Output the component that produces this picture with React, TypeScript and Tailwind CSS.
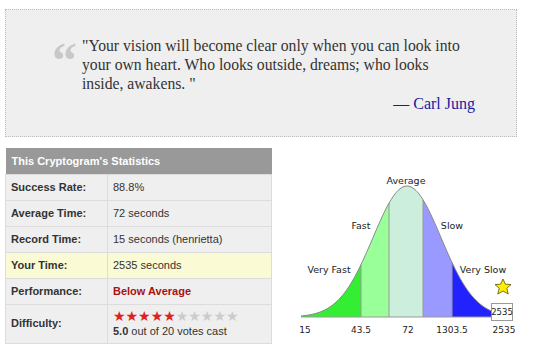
import React from "react";

const MU = 127;
const BASE = 157;
const PEAK = 131;
const SIGMA = 34;

const curveY = (x: number) => BASE - PEAK * Math.exp(-((x - MU) ** 2) / (2 * SIGMA * SIGMA));

// closed area under the curve between two x values
const areaPath = (x0: number, x1: number) => {
  let d = `M${x0},${BASE} `;
  for (let x = x0; x <= x1; x += 1) d += `L${x},${curveY(x).toFixed(2)} `;
  d += `L${x1},${curveY(x1).toFixed(2)} L${x1},${BASE} Z`;
  return d;
};

const linePath = (x0: number, x1: number) => {
  let d = `M${x0},${curveY(x0).toFixed(2)} `;
  for (let x = x0 + 1; x <= x1; x += 1) d += `L${x},${curveY(x).toFixed(2)} `;
  return d;
};

const zones = [
  { from: 21, to: 81, fill: "#33ee33" },
  { from: 81, to: 109, fill: "#99ff99" },
  { from: 109, to: 143, fill: "#cceedd" },
  { from: 143, to: 172, fill: "#9999ff" },
  { from: 172, to: 212, fill: "#2222ff" },
];

const BellChart = () => {
  const label = "fill-[#222] text-[9.5px] font-['DejaVu_Sans',sans-serif]";
  const axis = "fill-[#222] text-[9px] font-['DejaVu_Sans',sans-serif]";
  return (
    <svg width="260" height="188" viewBox="0 0 260 188">
      {zones.map((z) => (
        <path key={z.from} d={areaPath(z.from, z.to)} fill={z.fill} />
      ))}
      {[81, 109, 143, 172].map((x) => (
        <line key={x} x1={x} y1={BASE} x2={x} y2={curveY(x)} stroke="#999" strokeWidth="1" />
      ))}
      <path d={linePath(21, 212)} fill="none" stroke="#888" strokeWidth="1" />
      <line x1="21" y1={BASE} x2="212" y2={BASE} stroke="#999" strokeWidth="1" />

      <text x="126" y="24" textAnchor="middle" className={label}>Average</text>
      <text x="81" y="69" textAnchor="middle" className={label}>Fast</text>
      <text x="172" y="69" textAnchor="middle" className={label}>Slow</text>
      <text x="49" y="113" textAnchor="middle" className={label}>Very Fast</text>
      <text x="203" y="113" textAnchor="middle" className={label}>Very Slow</text>

      <polygon
        points="223,119 225.4,124.2 231,124.6 226.8,128.2 228.2,134 223,131 217.8,134 219.2,128.2 215,124.6 220.6,124.2"
        fill="#ffee00"
        stroke="#555500"
        strokeWidth="0.8"
      />
      <rect x="211.5" y="143.5" width="21" height="17" fill="#fff" stroke="#999" />
      <text x="222" y="155" textAnchor="middle" className="fill-[#222] text-[8.5px] font-['DejaVu_Sans',sans-serif]">
        2535
      </text>

      <text x="25" y="173" textAnchor="middle" className={axis}>15</text>
      <text x="81" y="173" textAnchor="middle" className={axis}>43.5</text>
      <text x="128" y="173" textAnchor="middle" className={axis}>72</text>
      <text x="172" y="173" textAnchor="middle" className={axis}>1303.5</text>
      <text x="224" y="173" textAnchor="middle" className={axis}>2535</text>
    </svg>
  );
};

const rows = [
  { label: "Success Rate:", value: "88.8%" },
  { label: "Average Time:", value: "72 seconds" },
  { label: "Record Time:", value: "15 seconds (henrietta)" },
  { label: "Your Time:", value: "2535 seconds", highlight: true },
  { label: "Performance:", value: "Below Average", red: true },
];

const App = () => {
  return (
    <div className="w-[540px] h-[348px] bg-white pt-[9px] pl-[5px] font-['Liberation_Sans',Arial,sans-serif] overflow-hidden">
      {/* Quote */}
      <div className="w-[512px] h-[128px] bg-[#efefef] border border-dotted border-[#bbb] flex">
        <div className="w-[76px] pt-[25px] pl-[46px] text-[50px] leading-none text-[#c8c8c8] font-['Liberation_Serif',serif] font-bold">
          &ldquo;
        </div>
        <div className="w-[393px] pt-[26px] text-[#333] font-['Liberation_Serif',Georgia,serif] text-[15.7px] leading-[19px]">
          <p>
            "Your vision will become clear only when you can look into
            <br />
            your own heart. Who looks outside, dreams; who looks
            <br />
            inside, awakens. "
          </p>
          <p className="text-right mt-[1px] text-[#1a1aa0] text-[16px]">&mdash; Carl Jung</p>
        </div>
      </div>

      <div className="flex mt-[11px]">
        {/* Stats table */}
        <table className="w-[267px] h-[195px] border-collapse text-[11px] text-[#333]">
          <thead>
            <tr>
              <th colSpan={2} className="h-[26px] bg-[#999] text-white text-left font-bold pl-[6px] text-[11px]">
                This Cryptogram's Statistics
              </th>
            </tr>
          </thead>
          <tbody>
            {rows.map((r) => (
              <tr key={r.label} className={r.highlight ? "bg-[#fafad4]" : "bg-[#efefef]"}>
                <td className="h-[26px] w-[102px] pl-[5px] font-bold border border-[#dcdcdc]">{r.label}</td>
                <td className={r.red ? "pl-[5px] border border-[#dcdcdc] text-[#aa1111] font-bold" : "pl-[5px] border border-[#dcdcdc]"}>
                  {r.value}
                </td>
              </tr>
            ))}
            <tr className="bg-[#efefef]">
              <td className="h-[39px] pl-[5px] font-bold border border-[#dcdcdc]">Difficulty:</td>
              <td className="pl-[5px] border border-[#dcdcdc]">
                <div className="flex leading-[13px] text-[14px] font-['DejaVu_Sans',sans-serif]">
                  <span className="text-[#dd2222]">★★★★★</span>
                  <span className="text-[#cccccc]">★★★★★</span>
                </div>
                <div className="text-[11px] leading-[14px] mt-[1px]">
                  <b>5.0</b> out of 20 votes cast
                </div>
              </td>
            </tr>
          </tbody>
        </table>

        {/* Distribution chart */}
        <div className="ml-[8px] mt-[12px]">
          <BellChart />
        </div>
      </div>
    </div>
  );
};

export default App;
